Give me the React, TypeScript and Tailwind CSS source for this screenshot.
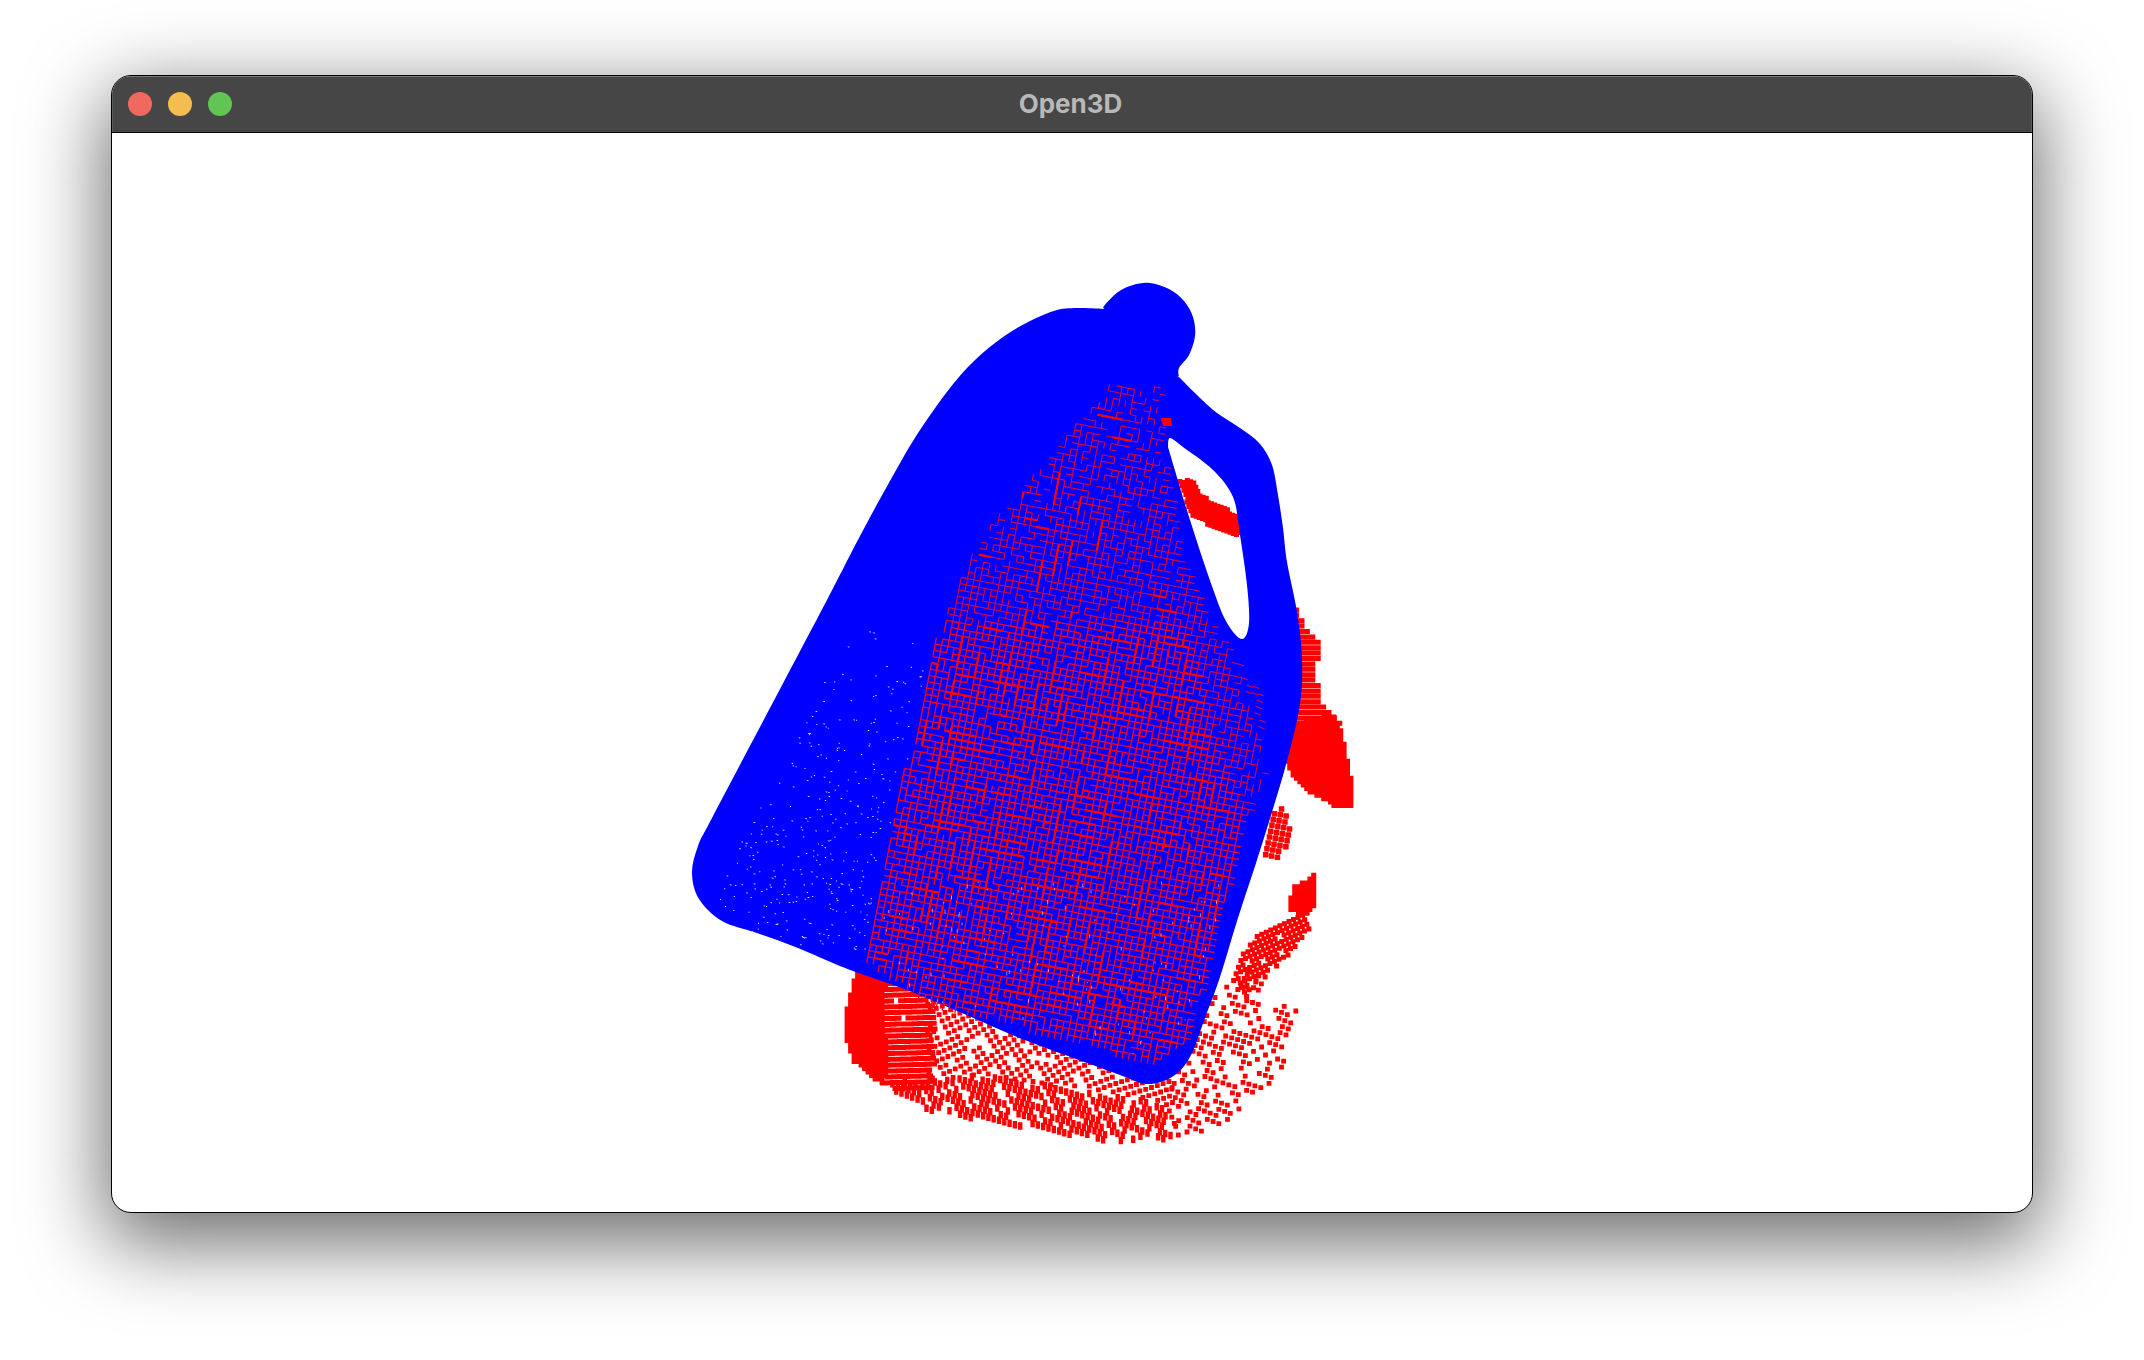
type Pt = [number, number];

// small seeded generator so the point cloud is the same on every render
const makeRng = (seed: number) => () => {
  seed = (seed + 0x6d2b79f5) | 0;
  let t = Math.imul(seed ^ (seed >>> 15), 1 | seed);
  t = (t + Math.imul(t ^ (t >>> 7), 61 | t)) ^ t;
  return ((t ^ (t >>> 14)) >>> 0) / 4294967296;
};

const inPoly = (x: number, y: number, poly: Pt[]) => {
  let inside = false;
  for (let i = 0, j = poly.length - 1; i < poly.length; j = i++) {
    const [xi, yi] = poly[i];
    const [xj, yj] = poly[j];
    if (yi > y !== yj > y && x < ((xj - xi) * (y - yi)) / (yj - yi) + xi) inside = !inside;
  }
  return inside;
};

const smooth = (pts: Pt[]) => {
  let d = `M${pts[0][0]} ${pts[0][1]}`;
  for (let i = 0; i < pts.length - 1; i++) {
    const p0 = pts[Math.max(i - 1, 0)];
    const p1 = pts[i];
    const p2 = pts[i + 1];
    const p3 = pts[Math.min(i + 2, pts.length - 1)];
    const c1x = p1[0] + (p2[0] - p0[0]) / 6;
    const c1y = p1[1] + (p2[1] - p0[1]) / 6;
    const c2x = p2[0] - (p3[0] - p1[0]) / 6;
    const c2y = p2[1] - (p3[1] - p1[1]) / 6;
    d += `C${c1x.toFixed(1)} ${c1y.toFixed(1)} ${c2x.toFixed(1)} ${c2y.toFixed(1)} ${p2[0]} ${p2[1]}`;
  }
  return d + "Z";
};

// bottle cap is close to a circle
const capArc: Pt[] = [-148, -125, -105, -85, -62, -40, -18, 5, 28, 48].map((deg) => [
  Math.round(1146 + 49 * Math.cos((deg * Math.PI) / 180)),
  Math.round(332 + 49 * Math.sin((deg * Math.PI) / 180)),
]);

const outline: Pt[] = [
  [1105, 309], [1105, 309], ...capArc, [1179, 377], [1179, 377], [1198, 396], [1217, 413], [1240, 428], [1260, 444],
  [1272, 465], [1278, 495], [1283, 528], [1287, 562], [1297, 612], [1302, 658], [1300, 704], [1287, 761], [1272, 812],
  [1257, 860], [1238, 918], [1220, 977], [1205, 1018], [1190, 1057], [1172, 1077], [1147, 1084], [1120, 1075],
  [1068, 1056], [1017, 1037], [962, 1013], [907, 990], [873, 978], [840, 966], [798, 948], [757, 933], [722, 921],
  [699, 899], [692, 873], [698, 846], [712, 818], [760, 727], [827, 600], [860, 536], [895, 472], [920, 430], [950, 388],
  [975, 360], [1003, 337], [1030, 321], [1057, 310], [1080, 308], [1105, 309],
];

const handleHole: Pt[] = [
  [1168, 447], [1170, 438], [1183, 447], [1213, 470], [1233, 497], [1240, 535], [1247, 585], [1249, 623], [1242, 639],
  [1227, 623], [1213, 589], [1190, 520], [1168, 447],
];

const meshArea: Pt[] = [
  [1107, 380], [1160, 384], [1162, 440], [1180, 551], [1213, 627], [1260, 696], [1267, 773], [1243, 822], [1230, 880],
  [1187, 1040], [1153, 1062], [1040, 1030], [940, 1007], [863, 957], [890, 833], [910, 743], [937, 633], [950, 604],
  [967, 562], [993, 520], [1063, 440],
];

const crescentMid: Pt[] = [
  [925, 985], [925, 1078], [980, 1072], [1160, 1100], [1172, 1132], [1172, 1000], [1000, 1000],
];
const crescentRight: Pt[] = [
  [1168, 1060], [1168, 1136], [1218, 1125], [1232, 1112], [1250, 1095], [1280, 1075], [1283, 1045], [1297, 1008],
  [1288, 998], [1265, 1012], [1262, 975], [1240, 965], [1200, 1000],
];
const crescentBottom: Pt[] = [
  [880, 1080], [980, 1072], [1160, 1100], [1172, 1136], [1106, 1137], [1039, 1127], [981, 1117], [928, 1107],
];
const crescentStripes: Pt[] = [[868, 970], [930, 992], [930, 1090], [876, 1085]];
const crescentSolid: Pt[] = [
  [856, 958], [848, 990], [843, 1013], [842, 1033], [850, 1058], [866, 1072], [882, 1084], [886, 1050], [880, 1015], [884, 975], [890, 960],
];
const cloudBand: Pt[] = [[1228, 985], [1240, 950], [1262, 925], [1285, 918], [1305, 905], [1308, 925], [1285, 955], [1262, 975], [1245, 995]];
const cloudKnot: Pt[] = [[1290, 885], [1312, 872], [1314, 900], [1304, 912], [1286, 910]];
const cloudSmall: Pt[] = [[1264, 820], [1278, 802], [1290, 825], [1288, 850], [1276, 858], [1258, 850]];
const cloudUpper: Pt[] = [[1292, 600], [1302, 625], [1318, 640], [1312, 672], [1320, 700], [1340, 722], [1290, 745]];
const cloudLower: Pt[] = [[1285, 722], [1330, 712], [1340, 730], [1345, 757], [1351, 790], [1351, 804], [1333, 804], [1303, 787], [1290, 772], [1283, 760]];
const behindHandle: Pt[] = [[1177, 478], [1190, 478], [1200, 493], [1217, 504], [1235, 511], [1240, 534], [1217, 527], [1197, 518], [1187, 510]];

const squares = (
  poly: Pt[],
  opts: { pitch: number; w: number; h: number; density: number; seed: number; angle?: number; wave?: number; gaps?: number },
) => {
  const rand = makeRng(opts.seed);
  const xs = poly.map((p) => p[0]);
  const ys = poly.map((p) => p[1]);
  const [x0, x1, y0, y1] = [Math.min(...xs), Math.max(...xs), Math.min(...ys), Math.max(...ys)];
  const cx = (x0 + x1) / 2;
  const cy = (y0 + y1) / 2;
  const reach = Math.hypot(x1 - x0, y1 - y0) / 2 + 10;
  const a = ((opts.angle ?? 0) * Math.PI) / 180;
  const wave = opts.wave ?? 0;
  const gaps = opts.gaps ?? 2;
  let d = "";
  for (let v = -reach; v < reach; v += opts.pitch) {
    for (let u = -reach; u < reach; u += opts.pitch) {
      let x = cx + u * Math.cos(a) - v * Math.sin(a);
      let y = cy + u * Math.sin(a) + v * Math.cos(a);
      y += wave * Math.sin(x / 36);
      x += (wave / 2) * Math.sin(y / 28);
      if (!inPoly(x, y, poly)) continue;
      if (Math.sin((x - y * 0.55) / 3.2 + 1.6 * Math.sin(y / 24)) > gaps) continue;
      if (rand() > opts.density) continue;
      d += `M${x.toFixed(1)} ${y.toFixed(1)}h${opts.w}v${opts.h}h-${opts.w}z`;
    }
  }
  return d;
};

const buildMesh = () => {
  const rand = makeRng(41);
  const a = (11 * Math.PI) / 180;
  const pitch = 6.4;
  const hx = pitch * Math.cos(a);
  const hy = pitch * Math.sin(a);
  let strong = "";
  let faint = "";
  let thick = "";
  for (let v = -500; v < 500; v++) {
    for (let u = -200; u < 200; u++) {
      const x = 1060 + u * hx - v * hy;
      const y = 740 + u * hy + v * hx;
      if (!inPoly(x, y, meshArea)) continue;
      const right = x - (1145 + Math.max(0, y - 500) * 0.3);
      const upper = y < 620;
      let p = 0.84;
      if (upper) p = 0.42 + ((y - 380) / 240) * 0.35;
      if (right > 0) p = Math.max(0.2, Math.min(p, 0.78 - right / 130));
      const seg = (dx: number, dy: number) => `M${x.toFixed(1)} ${y.toFixed(1)}l${dx.toFixed(1)} ${dy.toFixed(1)}`;
      const top = rand() < p;
      const side = rand() < (right > 40 ? p * 0.45 : p);
      const piece = (top ? seg(hx, right > 40 ? hy * 2 : hy) : "") + (side ? seg(-hy, hx) : "");
      if (right > 0 || upper) faint += piece;
      else strong += piece;
      if (right < 0 && rand() < (upper ? 0.03 : 0.07)) {
        const run = 1 + Math.floor(rand() * 5);
        const flat = rand() < 0.5;
        const dx = flat ? hx * run : -hy * run;
        const dy = flat ? hy * run : hx * run;
        // long runs must end inside the mesh too
        if (inPoly(x + dx, y + dy, meshArea)) thick += seg(dx, dy);
      }
    }
  }
  return { strong, faint, thick };
};

const buildSpecks = () => {
  const rand = makeRng(7);
  let d = "";
  for (let i = 0; i < 520; i++) {
    const x = 715 + rand() * 210;
    const y = 630 + Math.pow(rand(), 0.7) * 320;
    if (!inPoly(x, y, outline) || inPoly(x, y, meshArea)) continue;
    // stay clear of the bottle's outer rim
    if (x - 40 < 827 - ((y - 600) * 127) / 240 || y > 935 + (x - 757) * 0.38) continue;
    d += `M${x.toFixed(1)} ${y.toFixed(1)}h${(1 + rand() * 1.4).toFixed(1)}v1h-1z`;
  }
  return d;
};

const buildLowerSpecks = () => {
  const rand = makeRng(23);
  let d = "";
  for (let i = 0; i < 170; i++) {
    const x = 880 + rand() * 340;
    const y = 880 + rand() * 180;
    if (!inPoly(x, y, meshArea)) continue;
    d += `M${x.toFixed(1)} ${y.toFixed(1)}h1v${(1 + rand() * 3).toFixed(1)}h-1z`;
  }
  return d;
};

const mesh = buildMesh();
const specks = buildSpecks();
const lowerSpecks = buildLowerSpecks();

const redCloud =
  squares(crescentMid, { pitch: 6.6, w: 4.8, h: 4.8, density: 0.9, seed: 3, angle: -26, wave: 7, gaps: 0.9 }) +
  squares(crescentRight, { pitch: 6.4, w: 4.8, h: 4.8, density: 0.72, seed: 37, angle: 24, wave: 5, gaps: 0.8 }) +
  squares(crescentStripes, { pitch: 5.8, w: 7.5, h: 5, density: 0.97, seed: 5, angle: -6, wave: 3 }) +
  squares(crescentBottom, { pitch: 5.6, w: 4.4, h: 7.5, density: 0.88, seed: 9, angle: 18, wave: 2, gaps: 0.92 }) +
  squares(crescentSolid, { pitch: 3.5, w: 5, h: 5, density: 1, seed: 2 }) +
  squares(cloudBand, { pitch: 5, w: 5, h: 5, density: 0.88, seed: 11, angle: -25 }) +
  squares(cloudKnot, { pitch: 3.8, w: 5, h: 5, density: 1, seed: 13 }) +
  squares(cloudSmall, { pitch: 6, w: 5.5, h: 5.5, density: 0.84, seed: 17, angle: 12 }) +
  squares(cloudUpper, { pitch: 5.4, w: 6, h: 5, density: 0.97, seed: 19 }) +
  squares(cloudLower, { pitch: 3.4, w: 5, h: 5, density: 1, seed: 29 }) +
  squares(behindHandle, { pitch: 3.4, w: 5, h: 5, density: 1, seed: 31, angle: 20 });

const WindowTitleBar = () => (
  <div className="relative flex h-[57px] shrink-0 items-center border-b border-black bg-[#464646] pl-[16px] shadow-[inset_0_1px_0_#777777,inset_1px_0_0_#5c5c5c,inset_-1px_0_0_#5c5c5c]">
    <div className="flex items-center gap-[16px]">
      <span className="h-[24px] w-[24px] rounded-full bg-[#f0695f]" />
      <span className="h-[24px] w-[24px] rounded-full bg-[#f5bd4f]" />
      <span className="h-[24px] w-[24px] rounded-full bg-[#61c554]" />
    </div>
    <span className="absolute inset-x-0 -translate-y-px pr-[3px] text-center font-['Inter',sans-serif] text-[26px] font-bold text-[#b8b8b8]">
      Open3D
    </span>
  </div>
);

const PointClouds = () => (
  <svg className="block h-[1079px] w-[1920px]" viewBox="112 133 1920 1079">
    <path d={redCloud} fill="#ff0000" />
    <path d={smooth(outline) + smooth(handleHole)} fill="#0000ff" fillRule="evenodd" />
    <path d={mesh.faint} stroke="#d80038" strokeWidth="1.1" fill="none" />
    <path d={mesh.strong} stroke="#e8002a" strokeWidth="1.35" fill="none" />
    <path d={mesh.thick} stroke="#ff0000" strokeWidth="2.2" fill="none" />
    <path d={specks} fill="#ffffff" fillOpacity="0.85" />
    <path d={lowerSpecks} fill="#ffffff" fillOpacity="0.55" />
    <path d="M1161 418h10l1 8h-9z" fill="#ff0000" />
  </svg>
);

export default function App() {
  return (
    <div className="h-[1360px] w-[2144px] overflow-hidden bg-white pl-[111px] pt-[75px]">
      <div className="flex h-[1138px] w-[1922px] flex-col overflow-hidden rounded-[20px] border border-black bg-white shadow-[0_24px_80px_6px_rgba(0,0,0,0.58)]">
        <WindowTitleBar />
        <PointClouds />
      </div>
    </div>
  );
}
